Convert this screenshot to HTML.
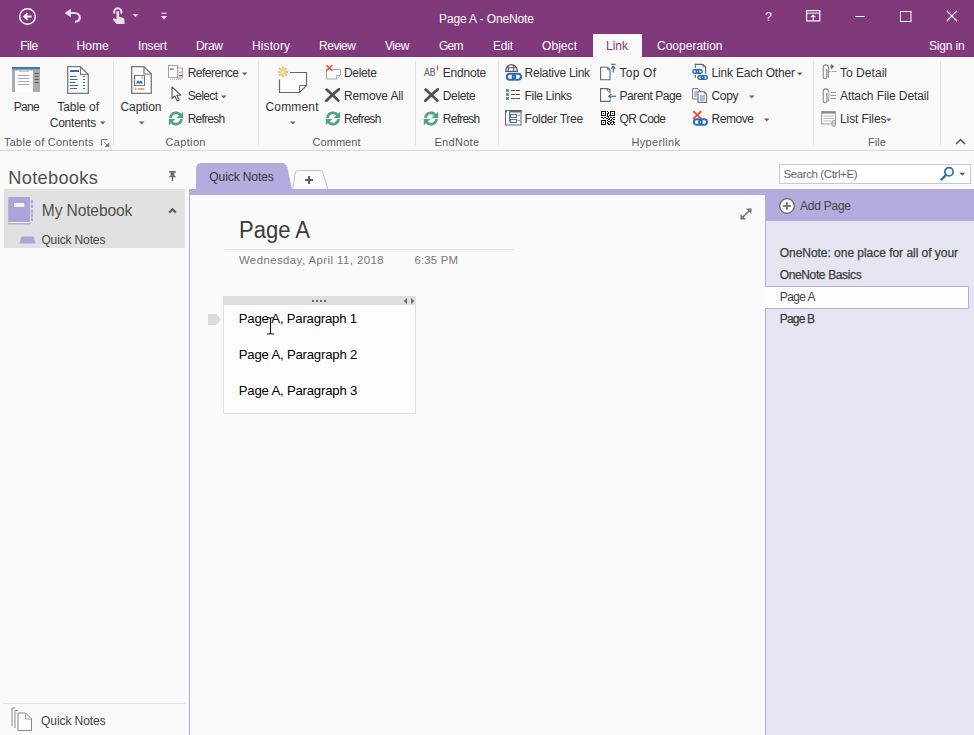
<!DOCTYPE html>
<html><head><meta charset="utf-8">
<style>
*{box-sizing:border-box;margin:0;padding:0}
html,body{width:974px;height:735px;overflow:hidden;background:#FAFAFA;font-family:"Liberation Sans",sans-serif;position:relative}
.a{position:absolute;white-space:nowrap}
.t{line-height:1}
</style></head>
<body>
<div class="a" style="left:0px;top:0px;width:974px;height:57px;background:#80397B;"></div>
<svg class="a" style="left:18px;top:7px;" width="19" height="19" viewBox="0 0 19 19"><circle cx="9.5" cy="9.5" r="7.8" fill="none" stroke="#fff" stroke-width="1.4"/><path d="M13.5 9.5H6.5M9.6 6.2L6.2 9.5L9.6 12.8" fill="none" stroke="#fff" stroke-width="1.8"/></svg>
<svg class="a" style="left:64px;top:7px;" width="18" height="17" viewBox="0 0 18 17"><path d="M2.6 6H10.5C13.6 6 15.8 8.2 15.8 10.8C15.8 13 14 14.4 11 14.8" fill="none" stroke="#EAE0EA" stroke-width="2.2"/><path d="M0.8 6L6.8 1.8V10.2z" fill="#EAE0EA"/></svg>
<svg class="a" style="left:111px;top:6px;" width="15" height="19" viewBox="0 0 15 19"><path d="M3.6 7.6A3.6 3.6 0 1 1 10 7.6" fill="none" stroke="#EAE0EA" stroke-width="2"/><path d="M5.5 5.2h2.6v5.6l2.8.7c1.7.4 2.6 1.4 2.6 3V18H5.6L1.6 13.4l1.3-1.3l2.6 1.4z" fill="#EAE0EA"/></svg>
<svg class="a" style="left:132px;top:13px;" width="7" height="5" viewBox="0 0 7 5"><path d="M0.5 1H6.5L3.5 4z" fill="#E8DDE8"/></svg>
<svg class="a" style="left:160px;top:11px;" width="8" height="10" viewBox="0 0 8 10"><path d="M1.5 2.2H6.5" stroke="#E8DDE8" stroke-width="1.2"/><path d="M0.8 5H7.2L4 8.5z" fill="#E8DDE8"/></svg>
<div class="a t" style="left:439.00px;top:12.80px;font-size:12px;color:#FFFFFF;letter-spacing:-0.116px;">Page A - OneNote</div>
<div class="a t" style="left:765.00px;top:10.57px;font-size:12.5px;color:#FFFFFF;">?</div>
<svg class="a" style="left:806px;top:10px;" width="15" height="12" viewBox="0 0 15 12"><rect x="0.6" y="0.6" width="13.2" height="10.3" fill="none" stroke="#fff" stroke-width="1.2"/><path d="M0.6 3.1H13.8" stroke="#fff" stroke-width="1"/><path d="M7.2 10.5V5.2M5 7.2L7.2 5L9.4 7.2" fill="none" stroke="#fff" stroke-width="1.1"/></svg>
<div class="a" style="left:855px;top:16px;width:10px;height:1px;background:#FFFFFF;"></div>
<svg class="a" style="left:900px;top:11px;" width="12" height="11" viewBox="0 0 12 11"><rect x="0.5" y="0.5" width="10.5" height="10" fill="none" stroke="#fff" stroke-width="1"/></svg>
<svg class="a" style="left:946px;top:10px;" width="12" height="12" viewBox="0 0 12 12"><path d="M0.8 0.8L11 11M11 0.8L0.8 11" stroke="#fff" stroke-width="1.1"/></svg>
<div class="a t" style="left:20.20px;top:39.80px;font-size:12px;color:#FFFFFF;letter-spacing:-0.415px;">File</div>
<div class="a t" style="left:76.40px;top:39.80px;font-size:12px;color:#FFFFFF;letter-spacing:0.095px;">Home</div>
<div class="a t" style="left:138.00px;top:39.80px;font-size:12px;color:#FFFFFF;letter-spacing:-0.203px;">Insert</div>
<div class="a t" style="left:196.00px;top:39.80px;font-size:12px;color:#FFFFFF;letter-spacing:-0.339px;">Draw</div>
<div class="a t" style="left:252.00px;top:39.80px;font-size:12px;color:#FFFFFF;letter-spacing:0.109px;">History</div>
<div class="a t" style="left:319.00px;top:39.80px;font-size:12px;color:#FFFFFF;letter-spacing:-0.472px;">Review</div>
<div class="a t" style="left:385.00px;top:39.80px;font-size:12px;color:#FFFFFF;letter-spacing:-0.432px;">View</div>
<div class="a t" style="left:439.00px;top:39.80px;font-size:12px;color:#FFFFFF;letter-spacing:-0.758px;">Gem</div>
<div class="a t" style="left:493.00px;top:39.80px;font-size:12px;color:#FFFFFF;letter-spacing:-0.229px;">Edit</div>
<div class="a t" style="left:542.00px;top:39.80px;font-size:12px;color:#FFFFFF;letter-spacing:0.062px;">Object</div>
<div class="a t" style="left:657.00px;top:39.80px;font-size:12px;color:#FFFFFF;letter-spacing:0.011px;">Cooperation</div>
<div class="a t" style="left:929.00px;top:39.80px;font-size:12px;color:#FFFFFF;letter-spacing:-0.184px;">Sign in</div>
<div class="a" style="left:593px;top:34px;width:49px;height:23px;background:#F9F9F9;"></div>
<div class="a t" style="left:606.00px;top:39.80px;font-size:12px;color:#80397B;letter-spacing:-0.005px;">Link</div>
<div class="a" style="left:0px;top:57px;width:974px;height:93px;background:#F9F9F9;"></div>
<div class="a" style="left:0px;top:150px;width:974px;height:1px;background:#D8D8D8;"></div>
<div class="a" style="left:113px;top:61px;width:1px;height:84px;background:#E2E2E2;"></div>
<div class="a" style="left:258px;top:61px;width:1px;height:84px;background:#E2E2E2;"></div>
<div class="a" style="left:415px;top:61px;width:1px;height:84px;background:#E2E2E2;"></div>
<div class="a" style="left:498px;top:61px;width:1px;height:84px;background:#E2E2E2;"></div>
<div class="a" style="left:813px;top:61px;width:1px;height:84px;background:#E2E2E2;"></div>
<div class="a" style="left:940px;top:61px;width:1px;height:84px;background:#E2E2E2;"></div>
<div class="a t" style="left:4.00px;top:136.65px;font-size:11px;color:#5A5A5A;letter-spacing:0.242px;">Table of Contents</div>
<svg class="a" style="left:101px;top:139px;" width="9" height="8" viewBox="0 0 9 8"><path d="M0.5 6.5V0.5H6.5" fill="none" stroke="#777" stroke-width="1"/><path d="M3 3L7.5 7.5M7.8 4.2V7.8H4.2z" fill="#777" stroke="#777" stroke-width="0.9"/></svg>
<div class="a t" style="left:165.50px;top:136.65px;font-size:11px;color:#5A5A5A;letter-spacing:0.346px;">Caption</div>
<div class="a t" style="left:312.50px;top:136.65px;font-size:11px;color:#5A5A5A;letter-spacing:0.052px;">Comment</div>
<div class="a t" style="left:434.50px;top:136.65px;font-size:11px;color:#5A5A5A;letter-spacing:0.281px;">EndNote</div>
<div class="a t" style="left:631.50px;top:136.65px;font-size:11px;color:#5A5A5A;letter-spacing:0.330px;">Hyperlink</div>
<div class="a t" style="left:868.00px;top:136.65px;font-size:11px;color:#5A5A5A;letter-spacing:0.089px;">File</div>
<svg class="a" style="left:955px;top:138px;" width="11" height="7" viewBox="0 0 11 7"><path d="M1 6L5.5 1.5L10 6" fill="none" stroke="#555" stroke-width="1.5"/></svg>
<div class="a t" style="left:13.70px;top:100.80px;font-size:12px;color:#333333;letter-spacing:-0.677px;">Pane</div>
<div class="a t" style="left:57.20px;top:100.80px;font-size:12px;color:#333333;letter-spacing:-0.033px;">Table of</div>
<div class="a t" style="left:49.70px;top:116.80px;font-size:12px;color:#333333;letter-spacing:-0.219px;">Contents</div>
<svg class="a" style="left:100px;top:121px;" width="6" height="4" viewBox="0 0 6 4"><path d="M0 0.5H5.5L2.75 3.5z" fill="#666"/></svg>
<div class="a t" style="left:120.50px;top:100.80px;font-size:12px;color:#333333;letter-spacing:-0.062px;">Caption</div>
<svg class="a" style="left:139px;top:121px;" width="6" height="4" viewBox="0 0 6 4"><path d="M0 0.5H5.5L2.75 3.5z" fill="#666"/></svg>
<div class="a t" style="left:265.50px;top:100.80px;font-size:12px;color:#333333;letter-spacing:0.164px;">Comment</div>
<svg class="a" style="left:290px;top:121px;" width="6" height="4" viewBox="0 0 6 4"><path d="M0 0.5H5.5L2.75 3.5z" fill="#666"/></svg>
<svg class="a" style="left:12px;top:67px;" width="28" height="25" viewBox="0 0 28 25"><rect x="0" y="0" width="28" height="25" fill="#ABABAB"/><rect x="0" y="0" width="28" height="2.2" fill="#3C78B4"/><rect x="3" y="3.5" width="18" height="21.5" fill="#FDFDFD"/><rect x="7" y="3.5" width="10" height="1.5" fill="#C8C8C8"/><path d="M6 8.5H17M6 11.5H17M6 14.5H17M6 17.5H17" stroke="#A0A0A0" stroke-width="0.9"/><path d="M22.5 6.5H27M22.5 9.5H27M22.5 12.5H27M22.5 15.5H27" stroke="#5E5E5E" stroke-width="1.2"/></svg>
<svg class="a" style="left:67px;top:66px;" width="22" height="28" viewBox="0 0 22 28"><path d="M0.7 0.7H13.5L21.3 8.5V27.3H0.7z" fill="#FDFDFD" stroke="#777" stroke-width="1.3"/><path d="M13.5 0.7V8.5H21.3" fill="none" stroke="#777" stroke-width="1.2"/><rect x="3" y="4" width="9" height="2" fill="#2F6DB5"/><path d="M3 10.5H9.5M3 13.5H10.5M3 16.5H8.5M3 19.5H11M3 22.5H10M16 10.5H18M16 13.5H18M16 16.5H18M16 19.5H18M16 22.5H18" stroke="#2F6DB5" stroke-width="1"/></svg>
<svg class="a" style="left:131px;top:66px;" width="22" height="28" viewBox="0 0 22 28"><path d="M0.7 0.7H13L20.3 8V27.3H0.7z" fill="#FDFDFD" stroke="#777" stroke-width="1.3"/><path d="M13 0.7V8H20.3" fill="none" stroke="#777" stroke-width="1.2"/><rect x="3.5" y="9.5" width="10" height="10" fill="#fff" stroke="#777" stroke-width="1"/><path d="M5 17.5L7 14L8.5 16L10 14.2L12 17.5z" fill="#2F6DB5"/><circle cx="11.3" cy="11.8" r="1.3" fill="#E8C25A"/><path d="M3.5 23H5.5M7 23H13.5" stroke="#E04A2E" stroke-width="1.2"/></svg>
<svg class="a" style="left:278px;top:65px;" width="30" height="29" viewBox="0 0 30 29"><path d="M12 7.5H28.5V20.5L21.5 27.5H1.5V14.5" fill="#FDFDFD" stroke="#666" stroke-width="1.2"/><path d="M28.5 20.5H21.5V27.5" fill="none" stroke="#666" stroke-width="1"/><g stroke="#EBC15D" stroke-width="2"><path d="M7.80 6.90L10.30 6.90M6.95 8.95L8.72 10.72M4.90 9.80L4.90 12.30M2.85 8.95L1.08 10.72M2.00 6.90L-0.50 6.90M2.85 4.85L1.08 3.08M4.90 4.00L4.90 1.50M6.95 4.85L8.72 3.08"/></g><circle cx="4.9" cy="6.9" r="2.1" fill="#FDFDFD" stroke="#EBC15D" stroke-width="1.2"/></svg>
<div class="a t" style="left:187.70px;top:66.80px;font-size:12px;color:#333333;letter-spacing:-0.509px;">Reference</div>
<svg class="a" style="left:242px;top:71.5px;" width="6" height="4" viewBox="0 0 6 4"><path d="M0 0.5H5.5L2.75 3.5z" fill="#666"/></svg>
<div class="a t" style="left:187.70px;top:89.80px;font-size:12px;color:#333333;letter-spacing:-0.612px;">Select</div>
<svg class="a" style="left:221px;top:94.5px;" width="6" height="4" viewBox="0 0 6 4"><path d="M0 0.5H5.5L2.75 3.5z" fill="#666"/></svg>
<div class="a t" style="left:187.70px;top:112.80px;font-size:12px;color:#333333;letter-spacing:-0.755px;">Refresh</div>
<div class="a t" style="left:344.00px;top:66.80px;font-size:12px;color:#333333;letter-spacing:-0.338px;">Delete</div>
<div class="a t" style="left:344.00px;top:89.80px;font-size:12px;color:#333333;letter-spacing:-0.134px;">Remove All</div>
<div class="a t" style="left:344.00px;top:112.80px;font-size:12px;color:#333333;letter-spacing:-0.755px;">Refresh</div>
<div class="a t" style="left:442.80px;top:66.80px;font-size:12px;color:#333333;letter-spacing:-0.203px;">Endnote</div>
<div class="a t" style="left:442.80px;top:89.80px;font-size:12px;color:#333333;letter-spacing:-0.338px;">Delete</div>
<div class="a t" style="left:442.80px;top:112.80px;font-size:12px;color:#333333;letter-spacing:-0.755px;">Refresh</div>
<div class="a t" style="left:524.60px;top:66.80px;font-size:12px;color:#333333;letter-spacing:-0.267px;">Relative Link</div>
<div class="a t" style="left:524.60px;top:89.80px;font-size:12px;color:#333333;letter-spacing:-0.354px;">File Links</div>
<div class="a t" style="left:524.60px;top:112.80px;font-size:12px;color:#333333;letter-spacing:-0.286px;">Folder Tree</div>
<div class="a t" style="left:619.50px;top:66.80px;font-size:12px;color:#333333;letter-spacing:0.228px;">Top Of</div>
<div class="a t" style="left:619.50px;top:89.80px;font-size:12px;color:#333333;letter-spacing:-0.422px;">Parent Page</div>
<div class="a t" style="left:619.50px;top:112.80px;font-size:12px;color:#333333;letter-spacing:-0.589px;">QR Code</div>
<div class="a t" style="left:711.50px;top:66.80px;font-size:12px;color:#333333;letter-spacing:-0.182px;">Link Each Other</div>
<svg class="a" style="left:797px;top:71.5px;" width="6" height="4" viewBox="0 0 6 4"><path d="M0 0.5H5.5L2.75 3.5z" fill="#666"/></svg>
<div class="a t" style="left:711.50px;top:89.80px;font-size:12px;color:#333333;letter-spacing:-0.339px;">Copy</div>
<svg class="a" style="left:749px;top:94.5px;" width="6" height="4" viewBox="0 0 6 4"><path d="M0 0.5H5.5L2.75 3.5z" fill="#666"/></svg>
<div class="a t" style="left:711.50px;top:112.80px;font-size:12px;color:#333333;letter-spacing:-0.438px;">Remove</div>
<svg class="a" style="left:764px;top:117.5px;" width="6" height="4" viewBox="0 0 6 4"><path d="M0 0.5H5.5L2.75 3.5z" fill="#666"/></svg>
<div class="a t" style="left:840.00px;top:66.80px;font-size:12px;color:#333333;letter-spacing:0.039px;">To Detail</div>
<div class="a t" style="left:840.00px;top:89.80px;font-size:12px;color:#333333;letter-spacing:-0.100px;">Attach File Detail</div>
<div class="a t" style="left:840.00px;top:112.80px;font-size:12px;color:#333333;letter-spacing:-0.094px;">List Files</div>
<svg class="a" style="left:886px;top:117.5px;" width="6" height="4" viewBox="0 0 6 4"><path d="M0 0.5H5.5L2.75 3.5z" fill="#666"/></svg>
<svg class="a" style="left:168px;top:65px;" width="15" height="15" viewBox="0 0 15 15"><rect x="0.5" y="0.5" width="9" height="12" fill="#FDFDFD" stroke="#9A9A9A" stroke-width="0.9"/><rect x="2" y="3.5" width="4" height="1.2" fill="#E04A2E"/><rect x="9.5" y="3" width="5" height="10" fill="#FDFDFD" stroke="#9A9A9A" stroke-width="0.9"/><path d="M10.8 6.5L12.3 8L13.8 6.5" fill="none" stroke="#3C78B4" stroke-width="0.9"/><rect x="10.5" y="10" width="3.5" height="1.3" fill="#E04A2E"/><path d="M2 14.3H14" stroke="#9A9A9A" stroke-width="0.8" stroke-dasharray="1 1"/></svg>
<svg class="a" style="left:171px;top:86px;" width="11" height="16" viewBox="0 0 11 16"><path d="M1 1V12.5L3.8 10L6.3 15L8.2 14L5.8 9.2H9.8z" fill="#FDFDFD" stroke="#555" stroke-width="1.1" stroke-linejoin="round"/></svg>
<svg class="a" style="left:168px;top:111px;" width="16" height="16" viewBox="0 0 16 16"><path d="M2.37 7A5.65 5.65 0 0 1 12.6 4.2" fill="none" stroke="#50A385" stroke-width="2.7"/><path d="M15.2 0.7V7H8.6z" fill="#50A385"/><g transform="rotate(180 8 7.5)"><path d="M2.37 7A5.65 5.65 0 0 1 12.6 4.2" fill="none" stroke="#50A385" stroke-width="2.7"/><path d="M15.2 0.7V7H8.6z" fill="#50A385"/></g></svg>
<svg class="a" style="left:325px;top:111px;" width="16" height="16" viewBox="0 0 16 16"><path d="M2.37 7A5.65 5.65 0 0 1 12.6 4.2" fill="none" stroke="#50A385" stroke-width="2.7"/><path d="M15.2 0.7V7H8.6z" fill="#50A385"/><g transform="rotate(180 8 7.5)"><path d="M2.37 7A5.65 5.65 0 0 1 12.6 4.2" fill="none" stroke="#50A385" stroke-width="2.7"/><path d="M15.2 0.7V7H8.6z" fill="#50A385"/></g></svg>
<svg class="a" style="left:423px;top:111px;" width="16" height="16" viewBox="0 0 16 16"><path d="M2.37 7A5.65 5.65 0 0 1 12.6 4.2" fill="none" stroke="#50A385" stroke-width="2.7"/><path d="M15.2 0.7V7H8.6z" fill="#50A385"/><g transform="rotate(180 8 7.5)"><path d="M2.37 7A5.65 5.65 0 0 1 12.6 4.2" fill="none" stroke="#50A385" stroke-width="2.7"/><path d="M15.2 0.7V7H8.6z" fill="#50A385"/></g></svg>
<svg class="a" style="left:325px;top:64px;" width="17" height="16" viewBox="0 0 17 16"><path d="M1.5 5.5H15.5V11.5L11.5 15H1.5z" fill="#FDFDFD" stroke="#A8A8A8" stroke-width="1"/><path d="M15.5 11.5H11.5V15" fill="none" stroke="#A8A8A8" stroke-width="0.9"/><path d="M1.3 1.3L7.3 6.7M7.3 1.3L1.3 6.7" stroke="#E04A2E" stroke-width="1.4"/></svg>
<svg class="a" style="left:325px;top:88px;" width="15" height="14" viewBox="0 0 15 14"><path d="M1.6 1.6C6 5.5 10 9.3 13.4 12.6M13.9 1.3C9 5 5 9 1.3 12.8" fill="none" stroke="#505050" stroke-width="2.7" stroke-linecap="round"/></svg>
<svg class="a" style="left:424px;top:88px;" width="15" height="14" viewBox="0 0 15 14"><path d="M1.6 1.6C6 5.5 10 9.3 13.4 12.6M13.9 1.3C9 5 5 9 1.3 12.8" fill="none" stroke="#505050" stroke-width="2.7" stroke-linecap="round"/></svg>
<div class="a t" style="left:424.20px;top:67.50px;font-size:10px;color:#707070;transform:scaleX(0.8693);transform-origin:0 0;-webkit-text-stroke:0.2px #707070;">AB</div>
<svg class="a" style="left:436px;top:65px;" width="3" height="6" viewBox="0 0 3 6"><path d="M1.5 0.3V5.5" stroke="#E04A2E" stroke-width="1.2"/></svg>
<svg class="a" style="left:505px;top:64px;" width="17" height="17" viewBox="0 0 17 17"><path d="M0.7 7.4C0.7 3.4 3.2 0.7 6.5 0.7C9.8 0.7 12.3 3.4 12.3 7.4Z" fill="#FDFDFD" stroke="#595959" stroke-width="1.2"/><path d="M3.3 1.6V7.4M8.7 1.6V7.4M1.3 3.8H11.7" fill="none" stroke="#595959" stroke-width="1.1"/><g fill="none" stroke="#2E6DB4" stroke-width="2"><rect x="1.8" y="9.8" width="8.4" height="6" rx="3"/><rect x="7.6" y="9.8" width="8.4" height="6" rx="3"/></g></svg>
<svg class="a" style="left:505px;top:88px;" width="16" height="14" viewBox="0 0 16 14"><g fill="#FDFDFD" stroke="#7A8FA6" stroke-width="1"><rect x="1.5" y="1.5" width="2" height="2"/><rect x="1.5" y="5.5" width="2" height="2"/><rect x="1.5" y="9.5" width="2" height="2"/></g><rect x="2" y="6" width="1" height="1" fill="#C0392B"/><rect x="2" y="2" width="1" height="1" fill="#666"/><rect x="2" y="10" width="1" height="1" fill="#666"/><path d="M6 2.5H10M11 2.5H15M6 6.5H10M11 6.5H15M6 10.5H10M11 10.5H15" stroke="#555" stroke-width="1"/></svg>
<svg class="a" style="left:505px;top:110px;" width="17" height="16" viewBox="0 0 17 16"><rect x="0.5" y="0.5" width="15.5" height="14.5" fill="#FDFDFD" stroke="#666" stroke-width="1"/><rect x="5" y="0" width="11.5" height="2.5" fill="#666"/><rect x="0" y="0" width="2" height="2.5" fill="#666"/><path d="M4.5 0.5V11.5H5.5M4.5 5.5H5.5" fill="none" stroke="#3C78B4" stroke-width="1"/><g fill="none" stroke="#3C78B4" stroke-width="1"><rect x="5.5" y="4.5" width="6" height="3"/><rect x="5.5" y="9.5" width="6" height="3"/></g><path d="M12.5 5.5H15M12.5 10.5H15" stroke="#9A9A9A" stroke-width="1"/></svg>
<svg class="a" style="left:600px;top:63px;" width="17" height="18" viewBox="0 0 17 18"><path d="M0.6 4.3H7.5L10 6.8V16.7H0.6z" fill="#FDFDFD" stroke="#666" stroke-width="1.1"/><path d="M7.5 4.3V6.8H10" fill="none" stroke="#666" stroke-width="0.8"/><path d="M11 1.3H15.8" stroke="#8B4A4A" stroke-width="1"/><path d="M13.3 3V9.5" stroke="#3C78B4" stroke-width="1.3"/><path d="M11.2 5.6L13.3 3.2L15.4 5.6" fill="none" stroke="#3C78B4" stroke-width="1.2"/></svg>
<svg class="a" style="left:600px;top:88px;" width="17" height="15" viewBox="0 0 17 15"><path d="M10 5.5V1.7L7.3 0.6H0.6V13.4H10V11.5" fill="#FDFDFD" stroke="#666" stroke-width="1.1"/><path d="M7.3 0.6V3H10" fill="none" stroke="#666" stroke-width="0.8"/><path d="M16 8.3H9" stroke="#3C78B4" stroke-width="1.3"/><path d="M11.3 6L8.8 8.3L11.3 10.6" fill="none" stroke="#3C78B4" stroke-width="1.3"/></svg>
<svg class="a" style="left:601px;top:111px;" width="14" height="14" viewBox="0 0 14 14"><g fill="#111" shape-rendering="crispEdges"><rect x="0" y="0" width="5" height="1"/><rect x="6" y="0" width="1" height="1"/><rect x="9" y="0" width="5" height="1"/><rect x="0" y="1" width="1" height="1"/><rect x="4" y="1" width="1" height="1"/><rect x="7" y="1" width="1" height="1"/><rect x="9" y="1" width="1" height="1"/><rect x="13" y="1" width="1" height="1"/><rect x="0" y="2" width="1" height="1"/><rect x="2" y="2" width="1" height="1"/><rect x="4" y="2" width="1" height="1"/><rect x="6" y="2" width="2" height="1"/><rect x="9" y="2" width="1" height="1"/><rect x="11" y="2" width="1" height="1"/><rect x="13" y="2" width="1" height="1"/><rect x="0" y="3" width="1" height="1"/><rect x="4" y="3" width="1" height="1"/><rect x="6" y="3" width="1" height="1"/><rect x="9" y="3" width="1" height="1"/><rect x="13" y="3" width="1" height="1"/><rect x="0" y="4" width="5" height="1"/><rect x="6" y="4" width="1" height="1"/><rect x="8" y="4" width="6" height="1"/><rect x="6" y="5" width="2" height="1"/><rect x="0" y="6" width="2" height="1"/><rect x="3" y="6" width="2" height="1"/><rect x="7" y="6" width="1" height="1"/><rect x="9" y="6" width="2" height="1"/><rect x="12" y="6" width="2" height="1"/><rect x="2" y="7" width="1" height="1"/><rect x="5" y="7" width="2" height="1"/><rect x="8" y="7" width="1" height="1"/><rect x="11" y="7" width="1" height="1"/><rect x="7" y="8" width="2" height="1"/><rect x="10" y="8" width="1" height="1"/><rect x="12" y="8" width="2" height="1"/><rect x="0" y="9" width="5" height="1"/><rect x="6" y="9" width="1" height="1"/><rect x="9" y="9" width="2" height="1"/><rect x="0" y="10" width="1" height="1"/><rect x="4" y="10" width="1" height="1"/><rect x="7" y="10" width="2" height="1"/><rect x="11" y="10" width="2" height="1"/><rect x="0" y="11" width="1" height="1"/><rect x="2" y="11" width="1" height="1"/><rect x="4" y="11" width="1" height="1"/><rect x="6" y="11" width="1" height="1"/><rect x="9" y="11" width="2" height="1"/><rect x="12" y="11" width="2" height="1"/><rect x="0" y="12" width="1" height="1"/><rect x="4" y="12" width="1" height="1"/><rect x="6" y="12" width="2" height="1"/><rect x="9" y="12" width="1" height="1"/><rect x="12" y="12" width="1" height="1"/><rect x="0" y="13" width="5" height="1"/><rect x="7" y="13" width="2" height="1"/><rect x="10" y="13" width="2" height="1"/><rect x="13" y="13" width="1" height="1"/></g></svg>
<svg class="a" style="left:691px;top:63px;" width="18" height="18" viewBox="0 0 18 18"><path d="M4.3 4.7V1.3H12L14.6 3.9V10.4M4.3 12V14.8" fill="none" stroke="#666" stroke-width="1.2"/><path d="M12 1.3V3.9H14.6" fill="none" stroke="#666" stroke-width="0.9"/><g fill="none" stroke="#2E6DB4" stroke-width="1.5"><rect x="1.8" y="6.8" width="6" height="3.4" rx="1.7"/><rect x="5.2" y="6.8" width="6" height="3.4" rx="1.7"/><rect x="6.9" y="12.8" width="6" height="3.4" rx="1.7"/><rect x="10.3" y="12.8" width="6" height="3.4" rx="1.7"/></g></svg>
<svg class="a" style="left:692px;top:88px;" width="16" height="15" viewBox="0 0 16 15"><path d="M0.6 0.6H6L7.5 2.1V11H0.6z" fill="#FDFDFD" stroke="#777" stroke-width="1"/><path d="M2.2 4H5.5M2.2 6H5.5M2.2 8H5" stroke="#3C78B4" stroke-width="0.9"/><path d="M6 3.6H12.3L14.6 5.9V14.4H6z" fill="#FDFDFD" stroke="#777" stroke-width="1.1"/><path d="M12.3 3.6V5.9H14.6" fill="none" stroke="#777" stroke-width="0.8"/><path d="M7.8 8H13M7.8 10H13M7.8 12H12.5" stroke="#3C78B4" stroke-width="0.9"/></svg>
<svg class="a" style="left:692px;top:110px;" width="17" height="17" viewBox="0 0 17 17"><path d="M1.2 1.2L9.3 8.8M9.3 1.2L1.2 8.8" stroke="#E04A2E" stroke-width="1.8"/><g fill="none" stroke="#2E6DB4" stroke-width="1.9"><rect x="1.8" y="9.2" width="8" height="5.6" rx="2.8"/><rect x="7" y="9.2" width="8" height="5.6" rx="2.8"/></g></svg>
<svg class="a" style="left:821px;top:63px;" width="17" height="18" viewBox="0 0 17 18"><g transform="translate(1.8,1.5)"><path d="M4 4.5V12.5A1.8 1.8 0 0 1 0.4 12.5V3A2.6 2.6 0 0 1 5.6 3V13" fill="none" stroke="#8A8A8A" stroke-width="1.1"/></g><path d="M10.5 1L13.2 3.6L10.5 6.2L9.2 3.6z" fill="#3C78B4"/><path d="M8 8.5H9.5M10.5 8.5H12M13 8.5H15" stroke="#8A9AB0" stroke-width="1"/></svg>
<svg class="a" style="left:821px;top:87px;" width="17" height="17" viewBox="0 0 17 17"><g transform="translate(1.8,1.5)"><path d="M4 4.5V12.5A1.8 1.8 0 0 1 0.4 12.5V3A2.6 2.6 0 0 1 5.6 3V13" fill="none" stroke="#8A8A8A" stroke-width="1.1"/></g><rect x="7" y="4.5" width="2" height="7" fill="#C8CEDA"/><path d="M9.5 5.5H15M9.5 8.5H15M9.5 11.5H15" stroke="#9A9A9A" stroke-width="1"/></svg>
<svg class="a" style="left:821px;top:111px;" width="16" height="16" viewBox="0 0 16 16"><rect x="0.6" y="0.6" width="13.8" height="12.3" fill="#FDFDFD" stroke="#999" stroke-width="1"/><rect x="0.6" y="0.6" width="13.8" height="2" fill="#8A8A8A"/><path d="M2.5 5H12.5M2.5 7.5H12.5M2.5 10H10" stroke="#B0B0B0" stroke-width="0.9"/><rect x="11" y="9.5" width="3.5" height="6" rx="1.5" fill="#CFCFCF" stroke="#999" stroke-width="0.8"/></svg>
<div class="a t" style="left:8.30px;top:168.93px;font-size:18.2px;color:#505050;letter-spacing:0.318px;">Notebooks</div>
<svg class="a" style="left:168px;top:170px;" width="10" height="12" viewBox="0 0 10 12"><g fill="#6A6A6A"><rect x="1.2" y="1" width="6.6" height="1.6"/><rect x="2.6" y="2.4" width="3.8" height="3.4"/><path d="M0.6 7.3H8.4L6.6 5.4H2.4z"/><rect x="3.8" y="7" width="1.4" height="4"/></g></svg>
<div class="a" style="left:4px;top:189px;width:181px;height:59px;background:#E1E1E1;"></div>
<svg class="a" style="left:8px;top:196px;" width="26" height="30" viewBox="0 0 26 30"><rect x="0.2" y="1" width="21.8" height="25" fill="#ADA4DA"/><rect x="1.2" y="26" width="20.8" height="1.2" fill="#F4F2FB"/><rect x="0.2" y="27.2" width="22" height="1.3" fill="#ADA4DA"/><rect x="6" y="7" width="10.3" height="4" fill="#F4F2FB"/><g fill="#ADA4DA"><rect x="23" y="4" width="2" height="3.4"/><rect x="23" y="8.6" width="2" height="3.4"/><rect x="23" y="13.2" width="2" height="3.4"/><rect x="23" y="17.8" width="2" height="3.4"/><rect x="23" y="22.4" width="2" height="2.6"/></g></svg>
<div class="a t" style="left:41.80px;top:202.74px;font-size:15.6px;color:#505050;letter-spacing:-0.138px;">My Notebook</div>
<svg class="a" style="left:168px;top:207px;" width="9" height="7" viewBox="0 0 9 7"><path d="M1.2 5.6L4.5 2.3L7.8 5.6" fill="none" stroke="#5E5E5E" stroke-width="2.2"/></svg>
<svg class="a" style="left:19px;top:236px;" width="18" height="8" viewBox="0 0 18 8"><path d="M0.5 7.5L2 1.8C2.3 0.8 3 0.5 4 0.5H13C14 0.5 14.7 0.8 15 1.8L16.5 7.5z" fill="#ADA3D8"/></svg>
<div class="a t" style="left:41.40px;top:233.70px;font-size:12px;color:#444;letter-spacing:-0.136px;">Quick Notes</div>
<div class="a" style="left:3px;top:703px;width:182px;height:1px;background:#E2E2E2;"></div>
<svg class="a" style="left:11px;top:707px;" width="23" height="25" viewBox="0 0 23 25"><path d="M1 19V1H4" fill="none" stroke="#888" stroke-width="1"/><path d="M4 21V3.5H7" fill="none" stroke="#888" stroke-width="1"/><path d="M7 6H14.5L20.5 12V23.5H7z" fill="#FDFDFD" stroke="#888" stroke-width="1"/><path d="M14.5 6V12H20.5" fill="none" stroke="#888" stroke-width="0.8"/></svg>
<div class="a t" style="left:41.00px;top:714.70px;font-size:12px;color:#444;letter-spacing:-0.066px;">Quick Notes</div>
<svg class="a" style="left:195px;top:161px;" width="100" height="29" viewBox="0 0 100 29"><path d="M1 28.5V8C1 4 3 2 7 2H86C90 2 91.5 4 92.5 7L97 28.5z" fill="#B4ACDF"/></svg>
<div class="a t" style="left:209.30px;top:170.80px;font-size:12px;color:#333;letter-spacing:-0.086px;">Quick Notes</div>
<svg class="a" style="left:291px;top:168px;" width="39" height="22" viewBox="0 0 39 22"><path d="M1.5 21.5L4.3 5C4.7 3.2 5.6 2.5 7.3 2.5H29C30.7 2.5 31.6 3.2 32 5L37 21.5" fill="#FBFBFB" stroke="#C4C4C4" stroke-width="1"/><path d="M14 12H22M18 8V16" stroke="#606060" stroke-width="2"/></svg>
<div class="a" style="left:189px;top:189px;width:785px;height:6px;background:#B4ACDF;"></div>
<div class="a" style="left:189px;top:189px;width:1px;height:546px;background:#B4ACDF;"></div>
<div class="a" style="left:190px;top:195px;width:575px;height:540px;background:#FBFBFB;"></div>
<div class="a" style="left:765px;top:189px;width:209px;height:546px;background:#E6E6F2;"></div>
<div class="a" style="left:765px;top:189px;width:1px;height:546px;background:#B4ACDF;"></div>
<div class="a" style="left:765px;top:189px;width:209px;height:32px;background:#B4ACDF;"></div>
<svg class="a" style="left:739px;top:207px;" width="14" height="14" viewBox="0 0 14 14"><path d="M2 12L12 2" stroke="#777" stroke-width="1.6"/><path d="M7 1.5H12.5V7z" fill="#777"/><path d="M1.5 7V12.5H7z" fill="#777"/></svg>
<div class="a t" style="left:239.30px;top:218.00px;font-size:24.7px;color:#3C3C3C;transform:scaleX(0.8917);transform-origin:0 0;">Page A</div>
<div class="a" style="left:225px;top:249px;width:289px;height:1px;background:#E3E3E3;"></div>
<div class="a t" style="left:238.90px;top:255.31px;font-size:11.4px;color:#767676;letter-spacing:0.435px;">Wednesday, April 11, 2018</div>
<div class="a t" style="left:414.40px;top:255.31px;font-size:11.4px;color:#767676;letter-spacing:0.213px;">6:35 PM</div>
<div class="a" style="left:223px;top:296px;width:193px;height:118px;background:#FDFDFD;border:1px solid #E1E1E1"></div>
<div class="a" style="left:223px;top:296px;width:193px;height:9px;background:#DEDEDE;"></div>
<svg class="a" style="left:311px;top:299px;" width="17" height="4" viewBox="0 0 17 4"><g fill="#666"><rect x="1" y="1" width="2" height="2"/><rect x="5" y="1" width="2" height="2"/><rect x="9" y="1" width="2" height="2"/><rect x="13" y="1" width="2" height="2"/></g></svg>
<svg class="a" style="left:403px;top:297px;" width="12" height="8" viewBox="0 0 12 8"><path d="M4 1L0.8 4L4 7z" fill="#666"/><path d="M8 1L11.2 4L8 7z" fill="#666"/></svg>
<svg class="a" style="left:207px;top:313px;" width="15" height="13" viewBox="0 0 15 13"><path d="M1 1H9.5L14 6.5L9.5 12H1z" fill="#DCDCDC"/></svg>
<div class="a t" style="left:238.80px;top:311.58px;font-size:13.2px;color:#000;letter-spacing:-0.236px;">Page A, Paragraph 1</div>
<div class="a t" style="left:238.80px;top:347.78px;font-size:13.2px;color:#000;letter-spacing:-0.220px;">Page A, Paragraph 2</div>
<div class="a t" style="left:238.80px;top:383.98px;font-size:13.2px;color:#000;letter-spacing:-0.220px;">Page A, Paragraph 3</div>
<svg class="a" style="left:266px;top:317px;" width="9" height="18" viewBox="0 0 9 18"><path d="M1 0.8H3.5C4 0.8 4.5 1.3 4.5 2V15.5C4.5 16.5 4 17 3.5 17H1M8 0.8H5.5C5 0.8 4.5 1.3 4.5 2M4.5 15.5C4.5 16.5 5 17 5.5 17H8" fill="none" stroke="#111" stroke-width="1.1"/></svg>
<div class="a" style="left:779px;top:164px;width:192px;height:20px;background:#FFFFFF;border:1px solid #C9C9C9"></div>
<div class="a t" style="left:783.50px;top:168.82px;font-size:11.5px;color:#666;letter-spacing:-0.397px;">Search (Ctrl+E)</div>
<svg class="a" style="left:940px;top:166px;" width="15" height="15" viewBox="0 0 15 15"><circle cx="9" cy="5.8" r="4.2" fill="none" stroke="#2B6CB0" stroke-width="1.7"/><path d="M6 9L1.5 13.5" stroke="#2B6CB0" stroke-width="2.4" stroke-linecap="round"/></svg>
<svg class="a" style="left:959px;top:172px;" width="7" height="5" viewBox="0 0 7 5"><path d="M0.5 0.8H6L3.25 3.8z" fill="#555"/></svg>
<svg class="a" style="left:777px;top:196px;" width="20" height="20" viewBox="0 0 20 20"><circle cx="10" cy="10" r="7.3" fill="#FBFBFB" stroke="#666" stroke-width="1.3"/><path d="M10 6.2V13.8M6.2 10H13.8" stroke="#777" stroke-width="2"/></svg>
<div class="a t" style="left:800.00px;top:200.10px;font-size:12px;color:#444;letter-spacing:-0.246px;">Add Page</div>
<div class="a t" style="left:779.70px;top:246.80px;font-size:12px;color:#3A3A3A;letter-spacing:-0.031px;-webkit-text-stroke:0.25px #3A3A3A;">OneNote: one place for all of your</div>
<div class="a t" style="left:779.70px;top:268.80px;font-size:12px;color:#3A3A3A;letter-spacing:-0.363px;-webkit-text-stroke:0.25px #3A3A3A;">OneNote Basics</div>
<div class="a" style="left:765px;top:286px;width:204px;height:23px;background:#FDFDFD;border:1px solid #B4ACDF;border-left:none"></div>
<div class="a t" style="left:779.70px;top:291.10px;font-size:12px;color:#444;letter-spacing:-0.561px;">Page A</div>
<div class="a t" style="left:779.70px;top:312.80px;font-size:12px;color:#3A3A3A;letter-spacing:-0.795px;-webkit-text-stroke:0.25px #3A3A3A;">Page B</div>
</body></html>
